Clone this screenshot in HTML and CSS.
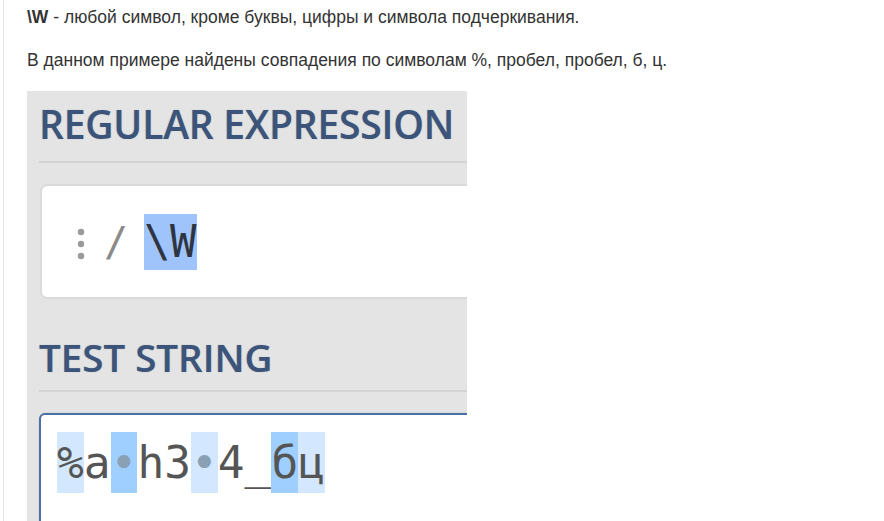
FILE: index.html
```html
<!DOCTYPE html>
<html lang="ru">
<head>
<meta charset="utf-8">
<link rel="stylesheet" href="styles.css">
</head>
<body>
<div class="page">
  <p><b>\W</b> - любой символ, кроме буквы, цифры и символа подчеркивания.</p>
  <p>В данном примере найдены совпадения по символам %, пробел, пробел, б, ц.</p>
  <div class="shot">
    <div class="heading">REGULAR EXPRESSION</div>
    <div class="rule"></div>
    <div class="field">
      <span class="flag"><svg width="8" height="32" viewBox="0 0 8 32"><circle cx="4" cy="4" r="3.2" fill="#9a9a9a"/><circle cx="4" cy="16" r="3.2" fill="#9a9a9a"/><circle cx="4" cy="28" r="3.2" fill="#9a9a9a"/></svg></span>
      <span class="slash">/</span>
      <span class="regex">\W</span>
    </div>
    <div class="heading heading-test">TEST STRING</div>
    <div class="rule rule-test"></div>
    <div class="field field-focus">
      <span class="m1">%</span><span>a</span><span class="m2 ws">•</span><span>h3</span><span class="m1 ws">•</span><span>4_</span><span class="m2">б</span><span class="m1">ц</span>
    </div>
  </div>
</div>
</body>
</html>
```

FILE: styles.css
```css
html, body {
  margin: 0;
  background: #ffffff;
}
body {
  font-family: "Liberation Sans", Arial, sans-serif;
  font-size: 17.5px;
  color: #333333;
}
.page {
  margin-left: 3px;
  border-left: 1px solid #e6e6e6;
  padding: 7px 0 0 23px;
  height: 514px;
  overflow: hidden;
}
.page p {
  margin: 0 0 22px;
  line-height: 21px;
  white-space: nowrap;
}
.page p:nth-of-type(2) {
  margin-bottom: 20px;
}
.shot {
  width: 440px;
  height: 430px;
  background: #e4e4e4;
  overflow: hidden;
  padding-left: 12px;
  box-sizing: border-box;
}
.heading {
  font-family: "Open Sans", sans-serif;
  font-weight: 600;
  font-size: 39px;
  line-height: 50px;
  color: #3c5479;
  padding-top: 8px;
  white-space: nowrap;
  letter-spacing: -0.2px;
  text-shadow: 0 0 1px rgba(60, 84, 121, 0.5);
}
.heading-test {
  font-size: 38.5px;
  letter-spacing: 0;
  padding-top: 34px;
}
.rule {
  height: 2px;
  background: #d3d3d3;
  margin-top: 12px;
  width: 440px;
}
.rule-test {
  margin-top: 8px;
}
.field {
  margin-top: 22px;
  margin-left: 2px;
  width: 460px;
  height: 113px;
  box-sizing: border-box;
  background: #ffffff;
  border: 1px solid #d8d8d8;
  border-radius: 6px;
  box-shadow: 0 0 2px rgba(0, 0, 0, 0.12);
  display: flex;
  align-items: center;
  padding-left: 35px;
  font-family: "DejaVu Sans Mono", monospace;
  font-size: 44px;
  color: #333333;
}
.flag {
  display: flex;
  width: 27px;
  justify-content: flex-start;
  margin-top: 4px;
}
.slash {
  color: #8a8a8a;
  width: 27px;
  font-size: 40px;
}
.regex {
  margin-left: 13px;
  background: #9fc3fb;
  height: 56px;
  line-height: 56px;
  width: 53px;
  letter-spacing: -0.5px;
  color: #2e3440;
}
.field-focus {
  margin-top: 21px;
  margin-left: 0;
  border: 2px solid #4d6fa8;
  height: 120px;
  align-items: flex-start;
  padding-left: 16px;
  padding-top: 17px;
  font-size: 44.5px;
  color: #555555;
}
.field-focus span {
  display: inline-block;
  height: 61px;
  line-height: 61px;
}
.m1 { background: #d3e8ff; }
.m2 { background: #9fcfff; }
.ws { color: #8aa0b5; }
```
